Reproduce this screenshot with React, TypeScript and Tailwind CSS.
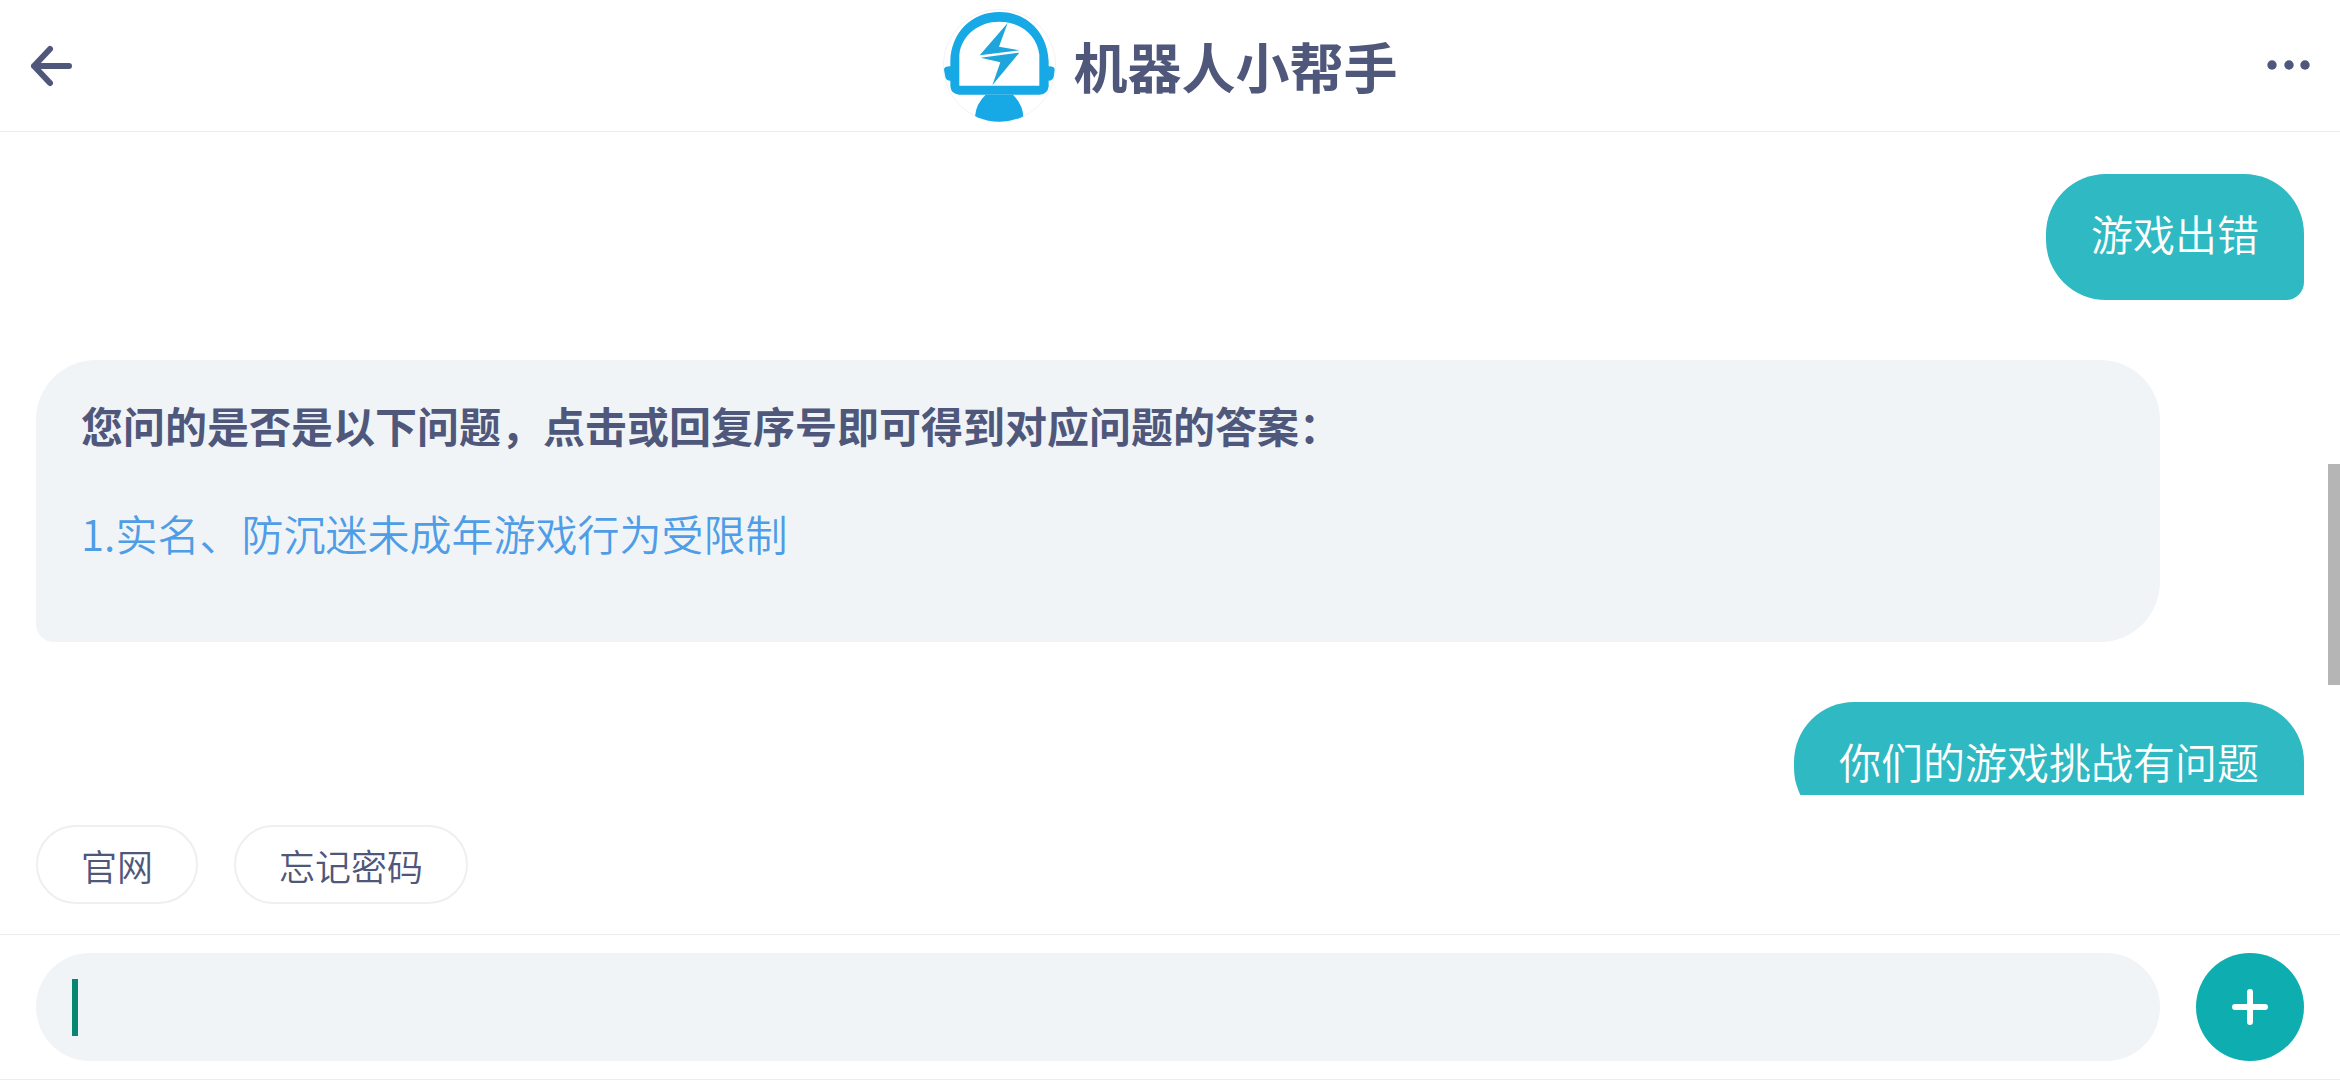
import { useState } from "react";

import clsx from "clsx";

interface Message {
  id: number;
  from: "user" | "bot";
  text: string;
  links?: string[];
}

const messages: Message[] = [
  { id: 1, from: "user", text: "游戏出错" },
  {
    id: 2,
    from: "bot",
    text: "您问的是否是以下问题，点击或回复序号即可得到对应问题的答案：",
    links: ["实名、防沉迷未成年游戏行为受限制"],
  },
  { id: 3, from: "user", text: "你们的游戏挑战有问题" },
];

const quickReplies = ["官网", "忘记密码"];

const RobotLogo = () => (
  <svg viewBox="68 28 339 339" className="size-[113px]" aria-hidden="true">
    <defs>
      <clipPath id="avatar">
        <circle cx="237.5" cy="197.5" r="168.5" />
      </clipPath>
    </defs>
    <circle cx="237.5" cy="197.5" r="168.5" fill="#fff" stroke="#ececec" strokeWidth="2" />
    <g clipPath="url(#avatar)" fill="#17a9e5">
      <path
        fillRule="evenodd"
        d="M90 200V185C92 100 152 37 237 37S382 100 385 185V200Q403 200 403 210L400 232Q397 243 385 243V260Q382 285 358 285H116Q92 283 90 260V243Q77 243 75 232L71 210Q71 200 90 200ZM117 258H357V165C350 105 298 66 237 66S124 105 117 165Z"
      />
      <path d="M196 285H278Q307 315 309 350L309 370H164V350Q167 312 196 285Z" />
    </g>
    <path fill="#1ea5dc" d="M262 70L178 167L298 152L236 141ZM181 174L297 159L216 257L240 188Z" />
  </svg>
);

const Header = () => (
  <header className="grid h-[132px] shrink-0 grid-cols-[1fr_auto_1fr] items-center border-b border-[#ececec]">
    <button type="button" aria-label="返回" className="justify-self-start pl-6">
      <svg
        viewBox="0 0 54 54"
        className="size-[54px]"
        fill="none"
        stroke="#4f577b"
        strokeWidth="6"
        strokeLinecap="round"
        strokeLinejoin="round"
      >
        <path d="M26 10L10 27L26 44M10 27H45" />
      </svg>
    </button>

    <div className="flex items-center gap-[18px]">
      <RobotLogo />
      <h1 className="text-[54px] leading-[72px] font-bold">机器人小帮手</h1>
    </div>

    <button type="button" aria-label="更多" className="justify-self-end pr-6">
      <svg viewBox="0 0 54 54" className="size-[54px]" fill="#4f577b">
        <circle cx="10" cy="26" r="4.7" />
        <circle cx="27" cy="26" r="4.7" />
        <circle cx="43" cy="26" r="4.7" />
      </svg>
    </button>
  </header>
);

const MessageBubble = ({ message }: { message: Message }) => {
  const isUser = message.from === "user";

  return (
    <li
      className={clsx(
        "shrink-0 rounded-[60px] px-[45px] text-[42px] leading-[54px]",
        isUser
          ? "self-end rounded-br-[18px] bg-[#2fb9c3] pt-8 pb-10 font-[350] text-white"
          : "mr-36 rounded-bl-[18px] bg-[#f0f4f7] pt-[38px] pb-7"
      )}
    >
      <p className={clsx(!isUser && "font-bold")}>{message.text}</p>
      {message.links && (
        <ol className="py-[54px] font-[350]">
          {message.links.map((link, index) => (
            <li key={link}>
              <a href="#" className="text-[#4e9de6]">
                {index + 1}.{link}
              </a>
            </li>
          ))}
        </ol>
      )}
    </li>
  );
};

const Composer = () => {
  const [draft, setDraft] = useState("");

  return (
    <form
      className="flex shrink-0 items-center gap-9 border-y border-[#ececec] px-9 py-[18px]"
      onSubmit={(e) => e.preventDefault()}
    >
      <div className="flex h-[108px] flex-1 items-center rounded-full bg-[#f0f4f7] px-9">
        {!draft && <span className="h-[57px] w-1.5 bg-[#078671]" />}
        <input
          type="text"
          aria-label="输入消息"
          value={draft}
          onChange={(e) => setDraft(e.target.value)}
          className="h-full min-w-0 flex-1 bg-transparent text-[42px] font-[350] caret-[#078671] outline-none"
        />
      </div>
      <button
        type="button"
        aria-label="添加"
        className="flex size-[108px] items-center justify-center rounded-full bg-[#0eaeb0]"
      >
        <svg viewBox="0 0 36 36" className="size-9" stroke="#fff" strokeWidth="6" strokeLinecap="round">
          <path d="M18 3V33M3 18H33" />
        </svg>
      </button>
    </form>
  );
};

export default function App() {
  return (
    <div className="flex h-screen flex-col bg-white font-['Noto_Sans_CJK_SC',sans-serif] text-[#4f577b]">
      <Header />

      <main className="relative min-h-0 flex-1 overflow-hidden">
        <ul className="flex flex-col gap-[60px] px-9 pt-[42px]">
          {messages.map((message) => (
            <MessageBubble key={message.id} message={message} />
          ))}
        </ul>
        <div className="absolute top-1/2 right-0 h-1/3 w-3 bg-[#b5b5b5]" />
      </main>

      <div className="flex shrink-0 gap-9 px-9 py-[30px]">
        {quickReplies.map((reply) => (
          <button
            key={reply}
            type="button"
            className="h-[79px] rounded-full border-2 border-[#efefef] px-[43px] text-[36px] leading-[54px] font-[350]"
          >
            {reply}
          </button>
        ))}
      </div>

      <Composer />
    </div>
  );
}
